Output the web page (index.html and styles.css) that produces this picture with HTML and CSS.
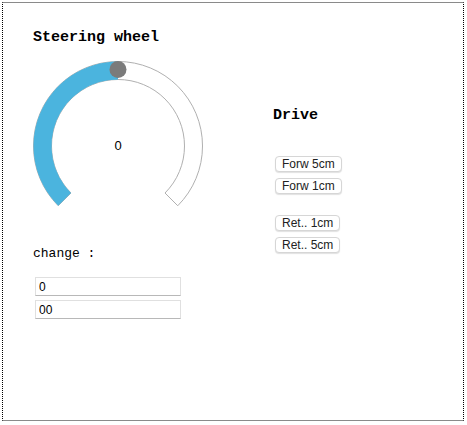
FILE: index.html
```html
<!DOCTYPE html>
<html>
<head>
<meta charset="utf-8">
<link rel="stylesheet" href="styles.css">
</head>
<body>
<div class="frame">
  <div class="left">
    <h3 class="title">Steering wheel</h3>
    <svg class="gauge" width="172" height="152" viewBox="0 0 172 152">
      <path d="M 26.25 145.75 A 84.5 84.5 0 1 1 145.75 145.75 L 133.02 133.02 A 66.5 66.5 0 1 0 38.98 133.02 Z" fill="#ffffff" stroke="#b0b0b0" stroke-width="1"/>
      <path d="M 26.25 145.75 A 84.5 84.5 0 0 1 86 1.5 L 86 19.5 A 66.5 66.5 0 0 0 38.98 133.02 Z" fill="#4bb4de"/>
      <circle cx="86" cy="9.5" r="8.5" fill="#7b7b7b"/>
      <text x="86" y="90" text-anchor="middle" class="gauge-value">0</text>
    </svg>
    <div class="change">change :</div>
    <input class="field" type="text" value="0">
    <input class="field" type="text" value="00">
  </div>
  <div class="right">
    <h3 class="title drive">Drive</h3>
    <div class="group">
      <button class="btn">Forw 5cm</button>
      <button class="btn">Forw 1cm</button>
    </div>
    <div class="group group2">
      <button class="btn">Ret.. 1cm</button>
      <button class="btn">Ret.. 5cm</button>
    </div>
  </div>
</div>
</body>
</html>
```
FILE: styles.css
```css
html, body {
  margin: 0;
  padding: 0;
  background: #ffffff;
}
.frame {
  margin: 2px;
  width: 460px;
  height: 417px;
  border-top: 1px solid #8a8a8a;
  border-bottom: 1px solid #8a8a8a;
  border-left: 1px dotted #000;
  border-right: 1px dotted #000;
  display: grid;
  grid-template-columns: 240px 1fr;
  align-items: start;
}
.left {
  padding-left: 30px;
  display: flex;
  flex-direction: column;
  align-items: flex-start;
}
.title {
  margin: 26px 0 0 0;
  font-family: "Liberation Mono", "Courier New", monospace;
  font-weight: bold;
  font-size: 15px;
  line-height: 18px;
  color: #000;
}
.gauge {
  display: block;
  margin: 13px 0 0 -1px;
  overflow: visible;
}
.gauge-value {
  font-family: "Liberation Sans", Arial, sans-serif;
  font-size: 13px;
  fill: #000;
}
.change {
  margin-top: 34px;
  font-family: "Liberation Mono", "Courier New", monospace;
  font-size: 13px;
  line-height: 16px;
  color: #000;
}
.field {
  box-sizing: border-box;
  width: 146px;
  height: 19px;
  margin: 15px 0 0 2px;
  padding: 0 3px;
  border: 1px solid #e0e0e0;
  border-bottom-color: #b8b8b8;
  font-family: "Liberation Sans", Arial, sans-serif;
  font-size: 12px;
  color: #000;
  background: #fff;
  outline: none;
}
.field + .field {
  margin-top: 4px;
}
.right {
  padding-left: 30px;
  display: flex;
  flex-direction: column;
  align-items: flex-start;
}
.drive {
  margin-top: 104px;
}
.group {
  display: flex;
  flex-direction: column;
  align-items: flex-start;
  gap: 6px;
  margin: 31px 0 0 2px;
}
.group2 {
  margin-top: 21px;
}
.btn {
  box-sizing: border-box;
  height: 16px;
  padding: 0 6px;
  border: 1px solid #d6d6d6;
  border-radius: 4px;
  background: #fff;
  box-shadow: 0 1px 1px rgba(0, 0, 0, 0.12);
  font-family: "Liberation Sans", Arial, sans-serif;
  font-size: 12px;
  line-height: 14px;
  color: #222;
}
```
